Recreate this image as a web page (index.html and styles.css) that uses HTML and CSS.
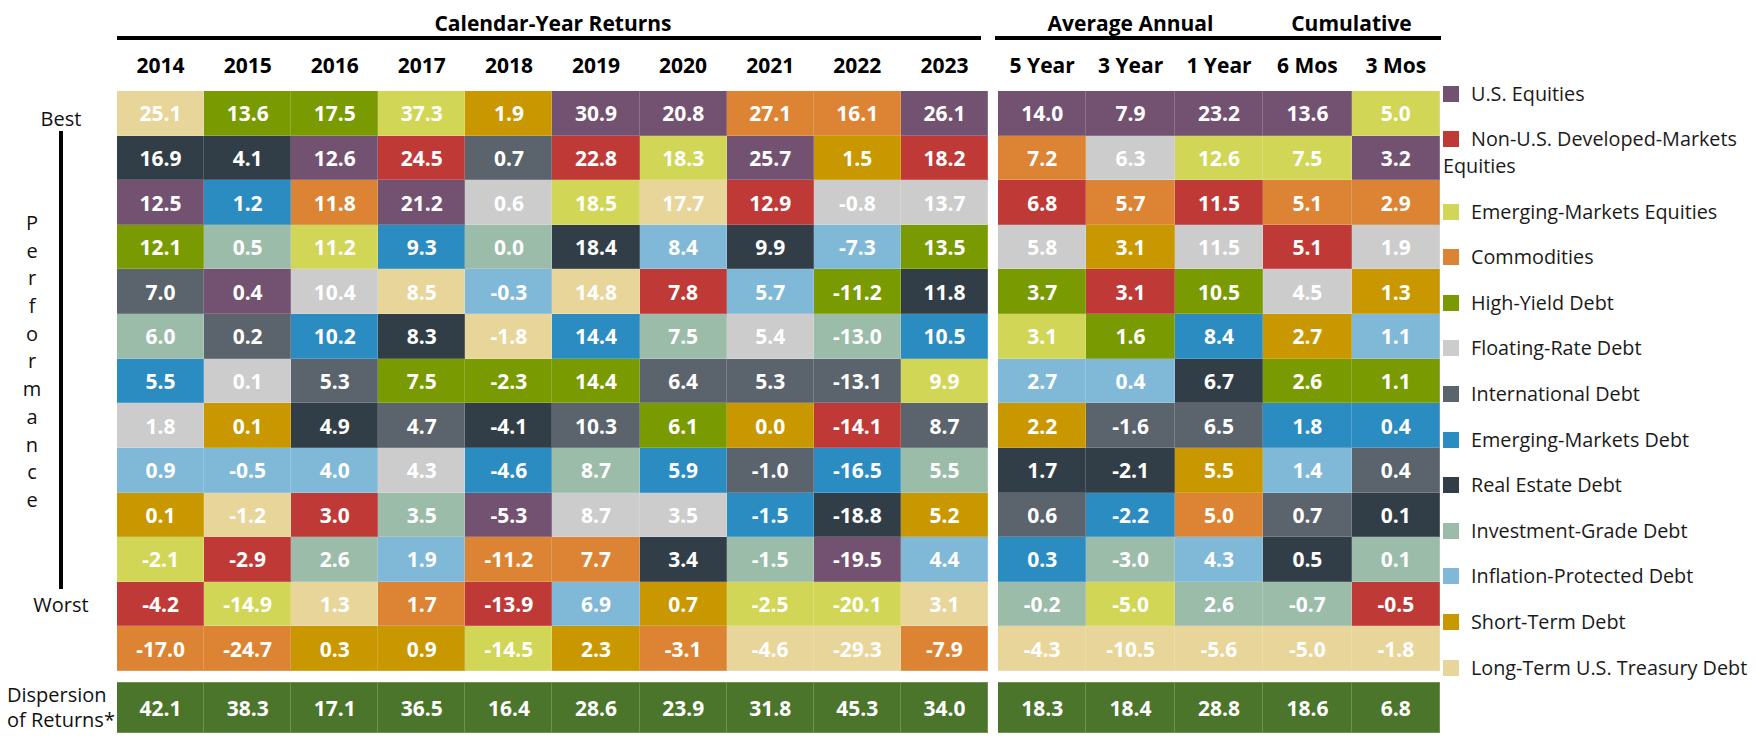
FILE: index.html
```html
<!DOCTYPE html>
<html lang="en">
<head>
<meta charset="utf-8">
<title>Asset Class Returns</title>
<link rel="stylesheet" href="styles.css">
</head>
<body>
<div class="page">

  <div class="side-body">
    <div class="best">Best</div>
    <div class="mid">
      <div class="letters"><span>P</span><span>e</span><span>r</span><span>f</span><span>o</span><span>r</span><span>m</span><span>a</span><span>n</span><span>c</span><span>e</span></div>
      <div class="bar"></div>
    </div>
    <div class="worst">Worst</div>
  </div>

  <div class="hdr cal-hdr">
    <div class="title">Calendar-Year Returns</div>
    <div class="rule"></div>
    <div class="cols">
      <div>2014</div><div>2015</div><div>2016</div><div>2017</div><div>2018</div><div>2019</div><div>2020</div><div>2021</div><div>2022</div><div>2023</div>
    </div>
  </div>

  <div class="hdr ret-hdr">
    <div class="titles"><div class="t3">Average Annual</div><div class="t2">Cumulative</div></div>
    <div class="rule"></div>
    <div class="cols">
      <div>5 Year</div><div>3 Year</div><div>1 Year</div><div>6 Mos</div><div>3 Mos</div>
    </div>
  </div>

  <div class="grid cal">
    <div class="k lt">25.1</div><div class="k hy">13.6</div><div class="k hy">17.5</div><div class="k em">37.3</div><div class="k st">1.9</div><div class="k us">30.9</div><div class="k us">20.8</div><div class="k co">27.1</div><div class="k co">16.1</div><div class="k us">26.1</div>
    <div class="k re">16.9</div><div class="k re">4.1</div><div class="k us">12.6</div><div class="k nu">24.5</div><div class="k id">0.7</div><div class="k nu">22.8</div><div class="k em">18.3</div><div class="k us">25.7</div><div class="k st">1.5</div><div class="k nu">18.2</div>
    <div class="k us">12.5</div><div class="k ed">1.2</div><div class="k co">11.8</div><div class="k us">21.2</div><div class="k fr">0.6</div><div class="k em">18.5</div><div class="k lt">17.7</div><div class="k nu">12.9</div><div class="k fr">-0.8</div><div class="k fr">13.7</div>
    <div class="k hy">12.1</div><div class="k ig">0.5</div><div class="k em">11.2</div><div class="k ed">9.3</div><div class="k ig">0.0</div><div class="k re">18.4</div><div class="k ip">8.4</div><div class="k re">9.9</div><div class="k ip">-7.3</div><div class="k hy">13.5</div>
    <div class="k id">7.0</div><div class="k us">0.4</div><div class="k fr">10.4</div><div class="k lt">8.5</div><div class="k ip">-0.3</div><div class="k lt">14.8</div><div class="k nu">7.8</div><div class="k ip">5.7</div><div class="k hy">-11.2</div><div class="k re">11.8</div>
    <div class="k ig">6.0</div><div class="k id">0.2</div><div class="k ed">10.2</div><div class="k re">8.3</div><div class="k lt">-1.8</div><div class="k ed">14.4</div><div class="k ig">7.5</div><div class="k fr">5.4</div><div class="k ig">-13.0</div><div class="k ed">10.5</div>
    <div class="k ed">5.5</div><div class="k fr">0.1</div><div class="k id">5.3</div><div class="k hy">7.5</div><div class="k hy">-2.3</div><div class="k hy">14.4</div><div class="k id">6.4</div><div class="k id">5.3</div><div class="k id">-13.1</div><div class="k em">9.9</div>
    <div class="k fr">1.8</div><div class="k st">0.1</div><div class="k re">4.9</div><div class="k id">4.7</div><div class="k re">-4.1</div><div class="k id">10.3</div><div class="k hy">6.1</div><div class="k st">0.0</div><div class="k nu">-14.1</div><div class="k id">8.7</div>
    <div class="k ip">0.9</div><div class="k ip">-0.5</div><div class="k ip">4.0</div><div class="k fr">4.3</div><div class="k ed">-4.6</div><div class="k ig">8.7</div><div class="k ed">5.9</div><div class="k id">-1.0</div><div class="k ed">-16.5</div><div class="k ig">5.5</div>
    <div class="k st">0.1</div><div class="k lt">-1.2</div><div class="k nu">3.0</div><div class="k ig">3.5</div><div class="k us">-5.3</div><div class="k fr">8.7</div><div class="k fr">3.5</div><div class="k ed">-1.5</div><div class="k re">-18.8</div><div class="k st">5.2</div>
    <div class="k em">-2.1</div><div class="k nu">-2.9</div><div class="k ig">2.6</div><div class="k ip">1.9</div><div class="k co">-11.2</div><div class="k co">7.7</div><div class="k re">3.4</div><div class="k ig">-1.5</div><div class="k us">-19.5</div><div class="k ip">4.4</div>
    <div class="k nu">-4.2</div><div class="k em">-14.9</div><div class="k lt">1.3</div><div class="k co">1.7</div><div class="k nu">-13.9</div><div class="k ip">6.9</div><div class="k st">0.7</div><div class="k em">-2.5</div><div class="k em">-20.1</div><div class="k lt">3.1</div>
    <div class="k co">-17.0</div><div class="k co">-24.7</div><div class="k st">0.3</div><div class="k st">0.9</div><div class="k em">-14.5</div><div class="k st">2.3</div><div class="k co">-3.1</div><div class="k lt">-4.6</div><div class="k lt">-29.3</div><div class="k co">-7.9</div>
  </div>

  <div class="grid ret">
    <div class="k us">14.0</div><div class="k us">7.9</div><div class="k us">23.2</div><div class="k us">13.6</div><div class="k em">5.0</div>
    <div class="k co">7.2</div><div class="k fr">6.3</div><div class="k em">12.6</div><div class="k em">7.5</div><div class="k us">3.2</div>
    <div class="k nu">6.8</div><div class="k co">5.7</div><div class="k nu">11.5</div><div class="k co">5.1</div><div class="k co">2.9</div>
    <div class="k fr">5.8</div><div class="k st">3.1</div><div class="k fr">11.5</div><div class="k nu">5.1</div><div class="k fr">1.9</div>
    <div class="k hy">3.7</div><div class="k nu">3.1</div><div class="k hy">10.5</div><div class="k fr">4.5</div><div class="k st">1.3</div>
    <div class="k em">3.1</div><div class="k hy">1.6</div><div class="k ed">8.4</div><div class="k st">2.7</div><div class="k ip">1.1</div>
    <div class="k ip">2.7</div><div class="k ip">0.4</div><div class="k re">6.7</div><div class="k hy">2.6</div><div class="k hy">1.1</div>
    <div class="k st">2.2</div><div class="k id">-1.6</div><div class="k id">6.5</div><div class="k ed">1.8</div><div class="k ed">0.4</div>
    <div class="k re">1.7</div><div class="k re">-2.1</div><div class="k st">5.5</div><div class="k ip">1.4</div><div class="k id">0.4</div>
    <div class="k id">0.6</div><div class="k ed">-2.2</div><div class="k co">5.0</div><div class="k id">0.7</div><div class="k re">0.1</div>
    <div class="k ed">0.3</div><div class="k ig">-3.0</div><div class="k ip">4.3</div><div class="k re">0.5</div><div class="k ig">0.1</div>
    <div class="k ig">-0.2</div><div class="k em">-5.0</div><div class="k ig">2.6</div><div class="k ig">-0.7</div><div class="k nu">-0.5</div>
    <div class="k lt">-4.3</div><div class="k lt">-10.5</div><div class="k lt">-5.6</div><div class="k lt">-5.0</div><div class="k lt">-1.8</div>
  </div>

  <div class="disp-label">Dispersion<br>of Returns*</div>

  <div class="disp cal-disp">
    <div>42.1</div><div>38.3</div><div>17.1</div><div>36.5</div><div>16.4</div><div>28.6</div><div>23.9</div><div>31.8</div><div>45.3</div><div>34.0</div>
  </div>

  <div class="disp ret-disp">
    <div>18.3</div><div>18.4</div><div>28.8</div><div>18.6</div><div>6.8</div>
  </div>

  <ul class="legend">
    <li><span class="sw us"></span>U.S. Equities</li>
    <li><span class="sw nu"></span>Non-U.S. Developed-Markets Equities</li>
    <li><span class="sw em"></span>Emerging-Markets Equities</li>
    <li><span class="sw co"></span>Commodities</li>
    <li><span class="sw hy"></span>High-Yield Debt</li>
    <li><span class="sw fr"></span>Floating-Rate Debt</li>
    <li><span class="sw id"></span>International Debt</li>
    <li><span class="sw ed"></span>Emerging-Markets Debt</li>
    <li><span class="sw re"></span>Real Estate Debt</li>
    <li><span class="sw ig"></span>Investment-Grade Debt</li>
    <li><span class="sw ip"></span>Inflation-Protected Debt</li>
    <li><span class="sw st"></span>Short-Term Debt</li>
    <li><span class="sw lt"></span>Long-Term U.S. Treasury Debt</li>
  </ul>

</div>
</body>
</html>
```

FILE: styles.css
```css
* { box-sizing: border-box; }

body {
  margin: 0;
  background: #ffffff;
  color: #111111;
  font-family: "Open Sans", "Noto Sans", sans-serif;
}

.page {
  display: grid;
  grid-template-columns: 117px 871px 10px 442px 1fr;
  grid-template-rows: 91px 580px 11px 51px;
  width: 1756px;
  height: 740px;
}

/* ---------- left scale ---------- */
.side-body {
  grid-column: 1;
  grid-row: 2;
  padding-top: 16px;
  font-size: 20px;
}
.best, .worst {
  padding-left: 5px;
  text-align: center;
  line-height: 24px;
  height: 24px;
}
.worst { margin-top: 4px; }
.mid {
  display: flex;
  height: 458px;
  padding-left: 22px;
}
.letters {
  width: 20px;
  padding-top: 78px;
  text-align: center;
}
.letters span {
  display: block;
  line-height: 27.7px;
  height: 27.7px;
}
.bar {
  width: 4px;
  margin-left: 17px;
  background: #000;
}

.disp-label {
  grid-column: 1;
  grid-row: 4;
  display: flex;
  align-items: center;
  padding-left: 7px;
  font-size: 20px;
  line-height: 24.3px;
}

/* ---------- headers ---------- */
.hdr {
  grid-row: 1;
  display: flex;
  flex-direction: column;
  color: #000;
  font-weight: 700;
}
.cal-hdr { grid-column: 2; }
.ret-hdr { grid-column: 4; }

.title, .titles {
  padding-top: 11px;
  height: 35px;
  line-height: 24px;
  font-size: 21px;
}
.title {
  width: 864px;
  text-align: center;
  padding-left: 8px;
}
.titles { display: flex; }
.t3 { width: 265px; text-align: center; }
.t2 { flex: 1; text-align: center; }

.rule {
  height: 4px;
  margin-top: 1px;
  background: #000;
}
.cal-hdr .rule { width: 864px; }
.ret-hdr .rule { width: 446px; margin-left: -3px; }

.cols {
  display: flex;
  margin-top: 12px;
  line-height: 26px;
  font-size: 21px;
}
.cols div {
  flex: 1;
  text-align: center;
}

/* ---------- value grids ---------- */
.grid {
  grid-row: 2;
  display: grid;
  grid-template-rows: repeat(13, 1fr);
}
.cal { grid-column: 2; grid-template-columns: repeat(10, 1fr); }
.ret { grid-column: 4; grid-template-columns: repeat(5, 1fr); }

.k {
  display: flex;
  align-items: center;
  justify-content: center;
  color: #ffffff;
  font-weight: 700;
  font-size: 21px;
  box-shadow: inset -1px -1px 0 rgba(255, 255, 255, 0.18);
}

.disp {
  grid-row: 4;
  display: grid;
  background: #4a752b;
  border-top: 1px solid #6f9152;
  border-bottom: 1px solid #6f9152;
}
.cal-disp { grid-column: 2; grid-template-columns: repeat(10, 1fr); }
.ret-disp { grid-column: 4; grid-template-columns: repeat(5, 1fr); }
.disp div {
  display: flex;
  align-items: center;
  justify-content: center;
  color: #ffffff;
  font-weight: 700;
  font-size: 21px;
  box-shadow: inset -1px 0 0 rgba(255, 255, 255, 0.2);
}

/* ---------- legend ---------- */
.legend {
  grid-column: 5;
  grid-row: 1 / 5;
  list-style: none;
  margin: 0;
  padding: 79.5px 0 0 3px;
  font-size: 19.8px;
  line-height: 27px;
  color: #1a1a1a;
}
.legend li { margin-bottom: 18.6px; }
.sw {
  display: inline-block;
  width: 16px;
  height: 16px;
  margin-right: 12px;
  vertical-align: -1px;
}

/* ---------- asset-class colours ---------- */
.us { background: #735271; }
.nu { background: #bf3a37; }
.em { background: #d2d656; }
.co { background: #dc8433; }
.hy { background: #7a9a01; }
.fr { background: #cccccc; }
.id { background: #5b636c; }
.ed { background: #2b8cc2; }
.re { background: #323e47; }
.ig { background: #9bbca9; }
.ip { background: #80b9d8; }
.st { background: #c99700; }
.lt { background: #e8d59a; }
```
